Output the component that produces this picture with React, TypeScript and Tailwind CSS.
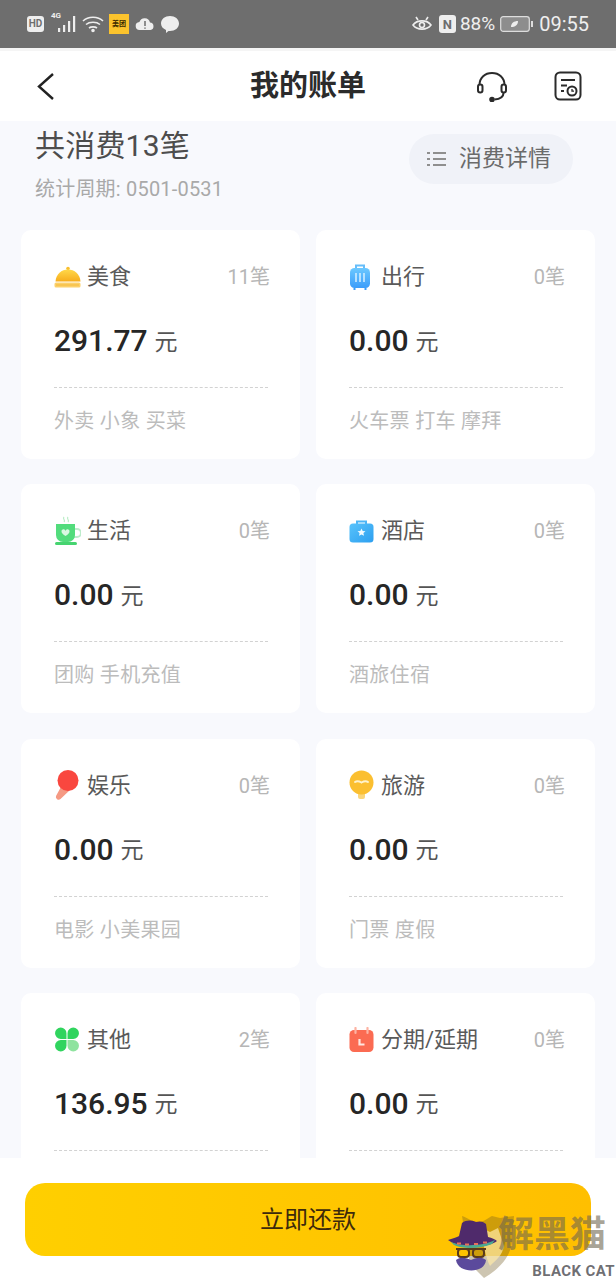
import React from "react";

const Meal = () => (
  <svg width="27" height="24" viewBox="0 0 27 24">
    <defs><linearGradient id="m" x1="0" y1="0" x2="0" y2="1"><stop offset="0" stopColor="#ffd84a" /><stop offset="1" stopColor="#f7ad1c" /></linearGradient></defs>
    <circle cx="14" cy="3.500" r="1.800" fill="#f9bf2e" />
    <path d="M1.500 16.500C2 9 7.500 4.500 14 4.500s12 4.500 12.500 12z" fill="url(#m)" />
    <rect x="0.500" y="17.500" width="26" height="5" rx="1.500" fill="#fbd06a" />
    <rect x="2" y="19.500" width="23" height="1" fill="#f5b93a" />
  </svg>
);
const Bag = () => (
  <svg width="22" height="28" viewBox="0 0 22 28">
    <defs><linearGradient id="b" x1="0" y1="0" x2="0" y2="1"><stop offset="0" stopColor="#6cc8ff" /><stop offset="1" stopColor="#3b9dfa" /></linearGradient></defs>
    <path d="M7 5V2.500h8V5" fill="none" stroke="#66bdfa" strokeWidth="2" />
    <rect x="1" y="5" width="20" height="20" rx="4.500" fill="url(#b)" />
    <path d="M7 10v9M11 10v9M15 10v9" stroke="#d6efff" strokeWidth="1.500" />
    <path d="M5.500 25v2M16.500 25v2" stroke="#3b9dfa" strokeWidth="2" />
  </svg>
);
const Cup = () => (
  <svg width="27" height="30" viewBox="0 0 27 30">
    <path d="M10 1c-2 2 2 3 0 5M14 1c-2 2 2 3 0 5" fill="none" stroke="#b9ecc6" strokeWidth="1.200" />
    <path d="M20 13h3a3 3 0 0 1 0 8h-4" fill="none" stroke="#bdeccb" strokeWidth="2" />
    <path d="M2 8h19v11a7 7 0 0 1-7 7H9a7 7 0 0 1-7-7z" fill="#52dc7c" />
    <rect x="1" y="26" width="22" height="3" rx="1.500" fill="#46d470" />
    <path d="M11.500 20c-3-2-4-3-4-4.500a2 2 0 0 1 4-.6 2 2 0 0 1 4 .6c0 1.500-1 2.500-4 4.500z" fill="#d9f8e2" />
  </svg>
);
const Camera = () => (
  <svg width="25" height="24" viewBox="0 0 25 24">
    <defs><linearGradient id="c" x1="0" y1="0" x2="1" y2="1"><stop offset="0" stopColor="#58c3fb" /><stop offset="1" stopColor="#2d9ff0" /></linearGradient></defs>
    <path d="M8 5V2.500h9V5" fill="none" stroke="#4db5f6" strokeWidth="2" />
    <rect x="0.500" y="4.500" width="24" height="19" rx="3.500" fill="url(#c)" />
    <path d="M12.500 9.500l1.200 2.500 2.800.3-2.100 1.800.6 2.700-2.500-1.400-2.500 1.400.6-2.700-2.100-1.800 2.800-.3z" fill="#f1faff" />
  </svg>
);
const Mic = () => (
  <svg width="25" height="31" viewBox="0 0 25 31">
    <path d="M8 15L2 26a2.800 2.800 0 0 0 4.500 3L16 20z" fill="#f59a84" />
    <circle cx="14" cy="10.500" r="10.500" fill="#f9473f" />
  </svg>
);
const Bulb = () => (
  <svg width="25" height="31" viewBox="0 0 25 31">
    <path d="M9 23h7v4a2 2 0 0 1-2 2h-3a2 2 0 0 1-2-2z" fill="#fbd67a" />
    <circle cx="12.500" cy="12.500" r="12" fill="#fbbf30" />
    <path d="M6 12c2-1.500 4-1 6.500.5C15 11 17 10.500 19 12" fill="none" stroke="#fff3cc" strokeWidth="2" strokeLinecap="round" />
  </svg>
);
const Clover = () => (
  <svg width="26" height="25" viewBox="0 0 25 24">
    <path d="M1 6a5.500 5.500 0 0 1 11 0v5.500H6.500A5.500 5.500 0 0 1 1 6z" fill="#30d45e" />
    <path d="M13 6a5.500 5.500 0 0 1 11 0 5.500 5.500 0 0 1-5.500 5.500H13z" fill="#30d45e" />
    <path d="M1 18a5.500 5.500 0 0 1 5.500-5.500H12V18a5.500 5.500 0 0 1-11 0z" fill="#30d45e" />
    <path d="M13 12.500h5.500A5.500 5.500 0 1 1 13 18z" fill="#8fe39f" />
  </svg>
);
const Cal = () => (
  <svg width="25" height="26" viewBox="0 0 25 26">
    <rect x="0.500" y="3" width="24" height="22" rx="4.500" fill="#fb6b52" />
    <path d="M6.500 1v5M18.500 1v5" stroke="#fdb3a3" strokeWidth="2.200" strokeLinecap="round" />
    <path d="M10.500 12v5.500h5" fill="none" stroke="#ffe6df" strokeWidth="2.200" />
  </svg>
);

const cards = [
  { icon: <Meal />, name: "美食", n: "11笔", amt: "291.77", tags: "外卖 小象 买菜", gap: "gap-[6px]" },
  { icon: <Bag />, name: "出行", n: "0笔", amt: "0.00", tags: "火车票 打车 摩拜", gap: "gap-[10px]" },
  { icon: <Cup />, name: "生活", n: "0笔", amt: "0.00", tags: "团购 手机充值", gap: "gap-[6px]" },
  { icon: <Camera />, name: "酒店", n: "0笔", amt: "0.00", tags: "酒旅住宿", gap: "gap-[7px]" },
  { icon: <Mic />, name: "娱乐", n: "0笔", amt: "0.00", tags: "电影 小美果园", gap: "gap-[8px]" },
  { icon: <Bulb />, name: "旅游", n: "0笔", amt: "0.00", tags: "门票 度假", gap: "gap-[7px]" },
  { icon: <Clover />, name: "其他", n: "2笔", amt: "136.95", tags: "", gap: "gap-[7px]" },
  { icon: <Cal />, name: "分期/延期", n: "0笔", amt: "0.00", tags: "", gap: "gap-[7px]" },
];

function Card({ c }: { c: (typeof cards)[number] }) {
  return (
    <div className="h-[229px] rounded-[10px] bg-white pl-[33px] pr-[30px] pt-[30px]">
      <div className="flex h-[34px] items-center justify-between">
        <div className={`flex items-center ${c.gap}`}>
          <span className="flex h-[34px] items-center">{c.icon}</span>
          <span className="text-[22px] leading-[34px] text-[#5a5a5a]">{c.name}</span>
        </div>
        <span className="text-[20px] leading-[34px] text-[#b6b6b6]">{c.n}</span>
      </div>
      <div className="mt-[25px] flex h-[44px] items-center gap-[7px]">
        <span className="text-[30px] font-medium leading-[44px] text-[#262626]">{c.amt}</span>
        <span className="mt-[3px] text-[23px] leading-[30px] text-[#555]">元</span>
      </div>
      <div className="mr-[2px] mt-[24px] border-t border-dashed border-[#d2d2d2]" />
      <div className="mt-[19px] text-[20px] leading-[28px] tracking-[0.3px] text-[#bcbcbc]">{c.tags}</div>
    </div>
  );
}

function StatusBar() {
  return (
    <div className="flex h-[48px] shrink-0 items-center justify-between bg-[#6e6e6e] pl-[27px] pr-[27px] text-[#efefef]">
      <div className="flex items-center gap-[4px]">
        <span className="flex h-[16px] w-[17px] items-center justify-center rounded-[3px] bg-[#eee] text-[10px] font-bold leading-none text-[#6e6e6e]">HD</span>
        <span className="relative ml-[2px] flex">
          <span className="absolute left-[1px] top-[-2px] text-[8px] font-bold leading-none text-[#eee]">4G</span>
          <svg width="28" height="20" viewBox="0 0 28 20">
            <g fill="#eee"><rect x="8" y="14" width="2.200" height="4" /><rect x="13" y="11" width="2.200" height="7" /><rect x="18" y="7" width="2.200" height="11" /><rect x="23" y="2" width="2.200" height="16" /></g>
          </svg>
        </span>
        <svg width="24" height="20" viewBox="0 0 24 20" className="-ml-[1px]" fill="none" stroke="#eee" strokeWidth="1.600">
          <path d="M2 7c5-5 15-5 20 0M5 10.500c3.500-3 10.500-3 14 0M8 14c2-1.500 6-1.500 8 0" />
          <circle cx="12" cy="16.500" r="1" fill="#eee" />
        </svg>
        <span className="flex h-[20px] w-[20px] flex-col items-center justify-center bg-[#fbc32d] text-[7px] font-bold leading-none text-[#3c2a00]">美团</span>
        <svg width="20" height="16" viewBox="0 0 20 16" className="ml-[2px]">
          <path d="M5 14a4 4 0 0 1-.6-8A5.500 5.500 0 0 1 15 6.500a3.800 3.800 0 0 1 .5 7.500z" fill="#eee" />
          <path d="M10 5v5M10 11.500v1.300" stroke="#6e6e6e" strokeWidth="1.500" />
        </svg>
        <svg width="20" height="20" viewBox="0 0 20 20" className="ml-[1px]">
          <path d="M10 2c5 0 9 3 9 7.500S15 17 10 17c-.5 0-1 0-1.500-.1L6 19v-3C3 14.700 1 12.500 1 9.500 1 5 5 2 10 2z" fill="#eee" />
        </svg>
      </div>
      <div className="flex items-center">
        <svg width="22" height="18" viewBox="0 0 22 18" fill="none" stroke="#eee" strokeWidth="1.600">
          <path d="M2 10c4-5.500 14-5.500 18 0-4 5.500-14 5.500-18 0z" />
          <circle cx="11" cy="10" r="2.500" />
          <path d="M5 2l2 3M17 2l-2 3" />
        </svg>
        <span className="ml-[6px] flex h-[18px] w-[17px] items-center justify-center rounded-[3px] bg-[#eee] text-[13px] font-bold leading-none text-[#6e6e6e]">N</span>
        <span className="ml-[4px] text-[19px] leading-[24px]">88%</span>
        <svg width="34" height="18" viewBox="0 0 34 18" className="ml-[5px]">
          <rect x="0.700" y="1.700" width="28.600" height="14.600" rx="2.500" fill="#8d8d8d" stroke="#ddd" strokeWidth="1.200" />
          <rect x="31" y="6" width="2" height="6" fill="#ddd" />
          <path d="M11 12c0-4 3-6 7-6 0 4-3 6-7 6z" fill="#eee" />
        </svg>
        <span className="ml-[5px] text-[20px] leading-[24px]">09:55</span>
      </div>
    </div>
  );
}

export default function App() {
  return (
    <div
      className="relative flex h-[1280px] w-[616px] flex-col overflow-hidden bg-white"
      style={{ fontFamily: 'Roboto, "Noto Sans CJK SC", sans-serif' }}
    >
      <StatusBar />
      <div className="h-[3px] shrink-0 bg-[#f5f5f5]" />
      <header className="flex h-[70px] shrink-0 items-center bg-white pl-[36px] pr-[34px]">
        <svg width="20" height="30" viewBox="0 0 20 30" fill="none" stroke="#222" strokeWidth="2.400">
          <path d="M17 3L3 15.500l14 12.500" />
        </svg>
        <h1 className="ml-[194px] text-[29px] font-bold leading-[40px] text-[#2b2b2b]">我的账单</h1>
        <div className="ml-auto flex items-center gap-[46px]">
          <svg width="32" height="32" viewBox="0 0 32 32" fill="none" stroke="#2b2b2b" strokeWidth="2">
            <path d="M3.500 15C3.500 7.500 9 3 16 3s12.500 4.500 12.500 12" />
            <rect x="2" y="14.500" width="4.500" height="8" rx="2.200" />
            <rect x="25.500" y="14.500" width="4.500" height="8" rx="2.200" />
            <path d="M27.500 23c0 3.500-3.500 6-9 6.500" />
            <circle cx="16" cy="29.500" r="1.800" fill="#2b2b2b" />
          </svg>
          <svg width="28" height="30" viewBox="0 0 28 30" fill="none" stroke="#2b2b2b" strokeWidth="2">
            <rect x="1.500" y="1.500" width="25" height="27" rx="4.500" />
            <path d="M7 9h14M7 14.500h6M7 20h3" />
            <circle cx="18" cy="20" r="4.500" />
            <path d="M18 18v2.200h2" strokeWidth="1.300" />
          </svg>
        </div>
      </header>
      <main className="flex min-h-0 flex-1 flex-col overflow-hidden bg-[#f8f9fd] px-[21px]">
        <div className="flex h-[109px] shrink-0 items-start justify-between pl-[14px] pr-[22px]">
          <div>
            <div className="mt-[5px] text-[30px] leading-[40px] tracking-[0.2px] text-[#4d4d4d]">共消费13笔</div>
            <div className="mt-[9px] text-[20px] leading-[28px] tracking-[0.2px] text-[#a9a9a9]">统计周期: 0501-0531</div>
          </div>
          <div className="mt-[13px] flex h-[50px] w-[164px] items-center rounded-full bg-[#f0f2f8] pl-[18px]">
            <svg width="20" height="16" viewBox="0 0 20 16" fill="#8f8f8f">
              <rect x="0" y="1" width="3" height="2" /><rect x="6" y="1" width="13" height="2" />
              <rect x="0" y="7" width="3" height="2" /><rect x="6" y="7" width="13" height="2" />
              <rect x="0" y="13" width="3" height="2" /><rect x="6" y="13" width="13" height="2" />
            </svg>
            <span className="ml-[12px] text-[23px] leading-[30px] text-[#6b6b6b]">消费详情</span>
          </div>
        </div>
        <div className="grid shrink-0 grid-cols-2 gap-x-[16px] gap-y-[25.330px]">
          {cards.map((c) => (
            <Card key={c.name} c={c} />
          ))}
        </div>
      </main>
      <footer className="h-[122px] shrink-0 bg-white px-[25px] pt-[25px]">
        <button className="flex h-[73px] w-[566px] items-center justify-center rounded-[20px] bg-gradient-to-r from-[#ffcf00] to-[#ffbf00] text-[24px] leading-[32px] text-[#3d2a0c]">
          立即还款
        </button>
      </footer>
      <div className="absolute bottom-0 right-0 flex h-[66px] w-[168px] items-end">
        <svg width="72" height="66" viewBox="0 0 72 66" className="absolute left-0 top-0">
          <path d="M14 2c6 2 10 6 16 6s10-4 14-6l8 2 14-2-2 26c-2 16-14 28-28 36L22 50z" fill="#6f5a20" fillOpacity="0.35" />
          <path d="M34 14l8 4 8-4 6 18c-2 10-8 14-14 20-4-8-8-24-8-38z" fill="#ffe9a8" fillOpacity="0.7" />
          <path d="M0 26c4-1 9-3 11-4l3-13c4-3 9-3 14-1 3-1 7-1 10 2l2 13c4 1 7 2 9 4-8 7-38 8-49-1z" fill="#4f2a6b" />
          <path d="M3 28c12 5 32 4 44-2l-3 4c-12 5-30 5-38 1z" fill="#4aa892" />
          <path d="M9 29.500h4M17 30.500h4M26 30h4M35 28.500h4" stroke="#e8705a" strokeWidth="2" />
          <path d="M8 35h30" stroke="#5a3b1c" strokeWidth="2" />
          <rect x="10" y="35" width="11" height="8" rx="3" fill="none" stroke="#5a3b1c" strokeWidth="2" />
          <rect x="25" y="35" width="11" height="8" rx="3" fill="none" stroke="#5a3b1c" strokeWidth="2" />
          <path d="M8 46c5-4 11-2 15 0 4-2 10-4 15 0-1 14-28 14-30 0z" fill="#5b4a9c" />
        </svg>
        <div className="relative h-full w-full">
          <span className="absolute left-[50px] top-[3px] whitespace-nowrap text-[36px] font-bold leading-[36px] text-[#6f6650]/60">解黑猫</span>
          <span className="absolute bottom-[1px] right-[1px] text-[15px] font-bold leading-[16px] tracking-[0.4px] text-[#55555a]/85">BLACK CAT</span>
        </div>
      </div>
    </div>
  );
}
